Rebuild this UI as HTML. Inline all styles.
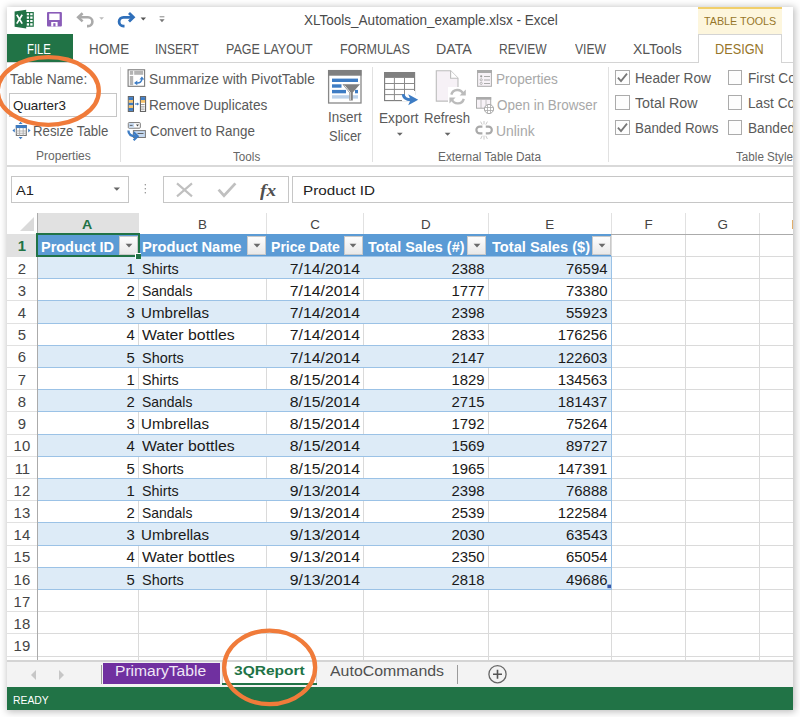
<!DOCTYPE html><html><head><meta charset="utf-8"><style>html,body{margin:0;padding:0;background:#fff;width:800px;height:717px;overflow:hidden;position:relative}
.r{position:absolute}
.t{position:absolute;white-space:nowrap;line-height:normal;font-family:"Liberation Sans",sans-serif}
</style></head><body>
<div class="r" style="left:7px;top:7px;width:786.00px;height:703.25px;background:#fff;box-shadow:1px 1px 7px 1px rgba(0,0,0,0.26);"></div>
<div class="r" style="left:0;top:0;width:793px;height:710.25px;overflow:hidden">
<div class="r" style="left:698px;top:7px;width:84.00px;height:26.50px;background:#fdf6dd;border-top:2px solid #f1cf6b;box-sizing:border-box;"></div>
<div class="r" style="left:7px;top:61.5px;width:786.00px;height:1.00px;background:#d4d4d4;"></div>
<div class="r" style="left:7px;top:34.2px;width:66.00px;height:28.30px;background:#217346;"></div>
<div class="r" style="left:698px;top:33.5px;width:84.00px;height:29.00px;background:#fff;border:1px solid #d4d4d4;border-bottom:none;box-sizing:border-box;"></div>
<div class="r" style="left:7px;top:165px;width:786.00px;height:1.50px;background:#d9d9d9;"></div>
<div class="r" style="left:120.2px;top:67px;width:1.00px;height:94.50px;background:#e1e1e1;"></div>
<div class="r" style="left:372.3px;top:67px;width:1.00px;height:94.50px;background:#e1e1e1;"></div>
<div class="r" style="left:608.3px;top:67px;width:1.00px;height:94.50px;background:#e1e1e1;"></div>
<div class="r" style="left:615.2px;top:70.2px;width:14.50px;height:14.50px;background:#fdfdfd;border:1px solid #ababab;box-sizing:border-box;"></div>
<div class="r" style="left:615.2px;top:95.3px;width:14.50px;height:14.50px;background:#fdfdfd;border:1px solid #ababab;box-sizing:border-box;"></div>
<div class="r" style="left:615.2px;top:120.2px;width:14.50px;height:14.50px;background:#fdfdfd;border:1px solid #ababab;box-sizing:border-box;"></div>
<div class="r" style="left:727.9px;top:70.2px;width:14.50px;height:14.50px;background:#fdfdfd;border:1px solid #ababab;box-sizing:border-box;"></div>
<div class="r" style="left:727.9px;top:95.3px;width:14.50px;height:14.50px;background:#fdfdfd;border:1px solid #ababab;box-sizing:border-box;"></div>
<div class="r" style="left:727.9px;top:120.2px;width:14.50px;height:14.50px;background:#fdfdfd;border:1px solid #ababab;box-sizing:border-box;"></div>
<div class="r" style="left:10.5px;top:176.4px;width:118.00px;height:26.80px;background:#fff;border:1px solid #c6c6c6;box-sizing:border-box;"></div>
<div class="r" style="left:163.3px;top:176.3px;width:126.10px;height:27.00px;background:#fff;border:1px solid #c6c6c6;box-sizing:border-box;"></div>
<div class="r" style="left:292.2px;top:176.3px;width:512.80px;height:26.40px;background:#fff;border:1px solid #c6c6c6;box-sizing:border-box;"></div>
<div class="r" style="left:9.2px;top:92.7px;width:107.50px;height:24.00px;background:#fff;border:1px solid #c6c6c6;box-sizing:border-box;"></div>
<div class="r" style="left:7px;top:212.7px;width:786.00px;height:21.50px;background:#fff;"></div>
<div class="r" style="left:37.2px;top:212.7px;width:101.80px;height:21.50px;background:#e1e1e1;"></div>
<div class="r" style="left:138.1px;top:212.7px;width:1.00px;height:21.50px;background:#e1e1e1;"></div>
<div class="r" style="left:266.0px;top:212.7px;width:1.00px;height:21.50px;background:#e1e1e1;"></div>
<div class="r" style="left:363.0px;top:212.7px;width:1.00px;height:21.50px;background:#e1e1e1;"></div>
<div class="r" style="left:487.6px;top:212.7px;width:1.00px;height:21.50px;background:#e1e1e1;"></div>
<div class="r" style="left:610.8px;top:212.7px;width:1.00px;height:21.50px;background:#e1e1e1;"></div>
<div class="r" style="left:685.25px;top:212.7px;width:1.00px;height:21.50px;background:#e1e1e1;"></div>
<div class="r" style="left:759.0px;top:212.7px;width:1.00px;height:21.50px;background:#e1e1e1;"></div>
<div class="r" style="left:7px;top:233.6px;width:786.00px;height:1.00px;background:#ababab;"></div>
<svg class="r" style="left:19px;top:216px" width="16" height="16"><path d="M15 1 L15 15 L1 15 Z" fill="#dadada"/></svg>
<div class="r" style="left:7px;top:234.2px;width:30.20px;height:426.30px;background:#fff;"></div>
<div class="r" style="left:7px;top:234.2px;width:30.20px;height:22.21px;background:#e1e1e1;"></div>
<div class="r" style="left:7px;top:255.90999999999997px;width:30.20px;height:1.00px;background:#e1e1e1;"></div>
<div class="r" style="left:7px;top:278.12px;width:30.20px;height:1.00px;background:#e1e1e1;"></div>
<div class="r" style="left:7px;top:300.33px;width:30.20px;height:1.00px;background:#e1e1e1;"></div>
<div class="r" style="left:7px;top:322.53999999999996px;width:30.20px;height:1.00px;background:#e1e1e1;"></div>
<div class="r" style="left:7px;top:344.75px;width:30.20px;height:1.00px;background:#e1e1e1;"></div>
<div class="r" style="left:7px;top:366.96px;width:30.20px;height:1.00px;background:#e1e1e1;"></div>
<div class="r" style="left:7px;top:389.16999999999996px;width:30.20px;height:1.00px;background:#e1e1e1;"></div>
<div class="r" style="left:7px;top:411.38px;width:30.20px;height:1.00px;background:#e1e1e1;"></div>
<div class="r" style="left:7px;top:433.59000000000003px;width:30.20px;height:1.00px;background:#e1e1e1;"></div>
<div class="r" style="left:7px;top:455.8px;width:30.20px;height:1.00px;background:#e1e1e1;"></div>
<div class="r" style="left:7px;top:478.01px;width:30.20px;height:1.00px;background:#e1e1e1;"></div>
<div class="r" style="left:7px;top:500.21999999999997px;width:30.20px;height:1.00px;background:#e1e1e1;"></div>
<div class="r" style="left:7px;top:522.4300000000001px;width:30.20px;height:1.00px;background:#e1e1e1;"></div>
<div class="r" style="left:7px;top:544.64px;width:30.20px;height:1.00px;background:#e1e1e1;"></div>
<div class="r" style="left:7px;top:566.85px;width:30.20px;height:1.00px;background:#e1e1e1;"></div>
<div class="r" style="left:7px;top:589.06px;width:30.20px;height:1.00px;background:#e1e1e1;"></div>
<div class="r" style="left:7px;top:611.27px;width:30.20px;height:1.00px;background:#e1e1e1;"></div>
<div class="r" style="left:7px;top:633.48px;width:30.20px;height:1.00px;background:#e1e1e1;"></div>
<div class="r" style="left:7px;top:655.69px;width:30.20px;height:1.00px;background:#e1e1e1;"></div>
<div class="r" style="left:36.7px;top:212.7px;width:1.00px;height:447.80px;background:#ababab;"></div>
<div class="r" style="left:37.7px;top:589.06px;width:755.30px;height:1.00px;background:#dadada;"></div>
<div class="r" style="left:37.7px;top:611.27px;width:755.30px;height:1.00px;background:#dadada;"></div>
<div class="r" style="left:37.7px;top:633.48px;width:755.30px;height:1.00px;background:#dadada;"></div>
<div class="r" style="left:37.7px;top:655.69px;width:755.30px;height:1.00px;background:#dadada;"></div>
<div class="r" style="left:138.1px;top:234.6px;width:1.00px;height:425.90px;background:#dadada;"></div>
<div class="r" style="left:266.0px;top:234.6px;width:1.00px;height:425.90px;background:#dadada;"></div>
<div class="r" style="left:363.0px;top:234.6px;width:1.00px;height:425.90px;background:#dadada;"></div>
<div class="r" style="left:487.6px;top:234.6px;width:1.00px;height:425.90px;background:#dadada;"></div>
<div class="r" style="left:610.8px;top:234.6px;width:1.00px;height:425.90px;background:#dadada;"></div>
<div class="r" style="left:685.25px;top:234.6px;width:1.00px;height:425.90px;background:#dadada;"></div>
<div class="r" style="left:759.0px;top:234.6px;width:1.00px;height:425.90px;background:#dadada;"></div>
<div class="r" style="left:611.3px;top:255.90999999999997px;width:181.70px;height:1.00px;background:#dadada;"></div>
<div class="r" style="left:611.3px;top:278.12px;width:181.70px;height:1.00px;background:#dadada;"></div>
<div class="r" style="left:611.3px;top:300.33px;width:181.70px;height:1.00px;background:#dadada;"></div>
<div class="r" style="left:611.3px;top:322.53999999999996px;width:181.70px;height:1.00px;background:#dadada;"></div>
<div class="r" style="left:611.3px;top:344.75px;width:181.70px;height:1.00px;background:#dadada;"></div>
<div class="r" style="left:611.3px;top:366.96px;width:181.70px;height:1.00px;background:#dadada;"></div>
<div class="r" style="left:611.3px;top:389.16999999999996px;width:181.70px;height:1.00px;background:#dadada;"></div>
<div class="r" style="left:611.3px;top:411.38px;width:181.70px;height:1.00px;background:#dadada;"></div>
<div class="r" style="left:611.3px;top:433.59000000000003px;width:181.70px;height:1.00px;background:#dadada;"></div>
<div class="r" style="left:611.3px;top:455.8px;width:181.70px;height:1.00px;background:#dadada;"></div>
<div class="r" style="left:611.3px;top:478.01px;width:181.70px;height:1.00px;background:#dadada;"></div>
<div class="r" style="left:611.3px;top:500.21999999999997px;width:181.70px;height:1.00px;background:#dadada;"></div>
<div class="r" style="left:611.3px;top:522.4300000000001px;width:181.70px;height:1.00px;background:#dadada;"></div>
<div class="r" style="left:611.3px;top:544.64px;width:181.70px;height:1.00px;background:#dadada;"></div>
<div class="r" style="left:611.3px;top:566.85px;width:181.70px;height:1.00px;background:#dadada;"></div>
<div class="r" style="left:611.3px;top:589.06px;width:181.70px;height:1.00px;background:#dadada;"></div>
<div class="r" style="left:37.7px;top:234.2px;width:573.60px;height:22.21px;background:#5b9bd5;"></div>
<div class="r" style="left:37.7px;top:256.40999999999997px;width:573.60px;height:22.21px;background:#ddebf7;"></div>
<div class="r" style="left:37.7px;top:255.90999999999997px;width:573.60px;height:1.00px;background:#9bc2e6;"></div>
<div class="r" style="left:37.7px;top:278.62px;width:573.60px;height:22.21px;background:#ffffff;"></div>
<div class="r" style="left:138.1px;top:278.62px;width:1.00px;height:22.21px;background:#dadada;"></div>
<div class="r" style="left:266.0px;top:278.62px;width:1.00px;height:22.21px;background:#dadada;"></div>
<div class="r" style="left:363.0px;top:278.62px;width:1.00px;height:22.21px;background:#dadada;"></div>
<div class="r" style="left:487.6px;top:278.62px;width:1.00px;height:22.21px;background:#dadada;"></div>
<div class="r" style="left:37.7px;top:278.12px;width:573.60px;height:1.00px;background:#9bc2e6;"></div>
<div class="r" style="left:37.7px;top:300.83px;width:573.60px;height:22.21px;background:#ddebf7;"></div>
<div class="r" style="left:37.7px;top:300.33px;width:573.60px;height:1.00px;background:#9bc2e6;"></div>
<div class="r" style="left:37.7px;top:323.03999999999996px;width:573.60px;height:22.21px;background:#ffffff;"></div>
<div class="r" style="left:138.1px;top:323.03999999999996px;width:1.00px;height:22.21px;background:#dadada;"></div>
<div class="r" style="left:266.0px;top:323.03999999999996px;width:1.00px;height:22.21px;background:#dadada;"></div>
<div class="r" style="left:363.0px;top:323.03999999999996px;width:1.00px;height:22.21px;background:#dadada;"></div>
<div class="r" style="left:487.6px;top:323.03999999999996px;width:1.00px;height:22.21px;background:#dadada;"></div>
<div class="r" style="left:37.7px;top:322.53999999999996px;width:573.60px;height:1.00px;background:#9bc2e6;"></div>
<div class="r" style="left:37.7px;top:345.25px;width:573.60px;height:22.21px;background:#ddebf7;"></div>
<div class="r" style="left:37.7px;top:344.75px;width:573.60px;height:1.00px;background:#9bc2e6;"></div>
<div class="r" style="left:37.7px;top:367.46px;width:573.60px;height:22.21px;background:#ffffff;"></div>
<div class="r" style="left:138.1px;top:367.46px;width:1.00px;height:22.21px;background:#dadada;"></div>
<div class="r" style="left:266.0px;top:367.46px;width:1.00px;height:22.21px;background:#dadada;"></div>
<div class="r" style="left:363.0px;top:367.46px;width:1.00px;height:22.21px;background:#dadada;"></div>
<div class="r" style="left:487.6px;top:367.46px;width:1.00px;height:22.21px;background:#dadada;"></div>
<div class="r" style="left:37.7px;top:366.96px;width:573.60px;height:1.00px;background:#9bc2e6;"></div>
<div class="r" style="left:37.7px;top:389.66999999999996px;width:573.60px;height:22.21px;background:#ddebf7;"></div>
<div class="r" style="left:37.7px;top:389.16999999999996px;width:573.60px;height:1.00px;background:#9bc2e6;"></div>
<div class="r" style="left:37.7px;top:411.88px;width:573.60px;height:22.21px;background:#ffffff;"></div>
<div class="r" style="left:138.1px;top:411.88px;width:1.00px;height:22.21px;background:#dadada;"></div>
<div class="r" style="left:266.0px;top:411.88px;width:1.00px;height:22.21px;background:#dadada;"></div>
<div class="r" style="left:363.0px;top:411.88px;width:1.00px;height:22.21px;background:#dadada;"></div>
<div class="r" style="left:487.6px;top:411.88px;width:1.00px;height:22.21px;background:#dadada;"></div>
<div class="r" style="left:37.7px;top:411.38px;width:573.60px;height:1.00px;background:#9bc2e6;"></div>
<div class="r" style="left:37.7px;top:434.09000000000003px;width:573.60px;height:22.21px;background:#ddebf7;"></div>
<div class="r" style="left:37.7px;top:433.59000000000003px;width:573.60px;height:1.00px;background:#9bc2e6;"></div>
<div class="r" style="left:37.7px;top:456.3px;width:573.60px;height:22.21px;background:#ffffff;"></div>
<div class="r" style="left:138.1px;top:456.3px;width:1.00px;height:22.21px;background:#dadada;"></div>
<div class="r" style="left:266.0px;top:456.3px;width:1.00px;height:22.21px;background:#dadada;"></div>
<div class="r" style="left:363.0px;top:456.3px;width:1.00px;height:22.21px;background:#dadada;"></div>
<div class="r" style="left:487.6px;top:456.3px;width:1.00px;height:22.21px;background:#dadada;"></div>
<div class="r" style="left:37.7px;top:455.8px;width:573.60px;height:1.00px;background:#9bc2e6;"></div>
<div class="r" style="left:37.7px;top:478.51px;width:573.60px;height:22.21px;background:#ddebf7;"></div>
<div class="r" style="left:37.7px;top:478.01px;width:573.60px;height:1.00px;background:#9bc2e6;"></div>
<div class="r" style="left:37.7px;top:500.71999999999997px;width:573.60px;height:22.21px;background:#ffffff;"></div>
<div class="r" style="left:138.1px;top:500.71999999999997px;width:1.00px;height:22.21px;background:#dadada;"></div>
<div class="r" style="left:266.0px;top:500.71999999999997px;width:1.00px;height:22.21px;background:#dadada;"></div>
<div class="r" style="left:363.0px;top:500.71999999999997px;width:1.00px;height:22.21px;background:#dadada;"></div>
<div class="r" style="left:487.6px;top:500.71999999999997px;width:1.00px;height:22.21px;background:#dadada;"></div>
<div class="r" style="left:37.7px;top:500.21999999999997px;width:573.60px;height:1.00px;background:#9bc2e6;"></div>
<div class="r" style="left:37.7px;top:522.9300000000001px;width:573.60px;height:22.21px;background:#ddebf7;"></div>
<div class="r" style="left:37.7px;top:522.4300000000001px;width:573.60px;height:1.00px;background:#9bc2e6;"></div>
<div class="r" style="left:37.7px;top:545.14px;width:573.60px;height:22.21px;background:#ffffff;"></div>
<div class="r" style="left:138.1px;top:545.14px;width:1.00px;height:22.21px;background:#dadada;"></div>
<div class="r" style="left:266.0px;top:545.14px;width:1.00px;height:22.21px;background:#dadada;"></div>
<div class="r" style="left:363.0px;top:545.14px;width:1.00px;height:22.21px;background:#dadada;"></div>
<div class="r" style="left:487.6px;top:545.14px;width:1.00px;height:22.21px;background:#dadada;"></div>
<div class="r" style="left:37.7px;top:544.64px;width:573.60px;height:1.00px;background:#9bc2e6;"></div>
<div class="r" style="left:37.7px;top:567.35px;width:573.60px;height:22.21px;background:#ddebf7;"></div>
<div class="r" style="left:37.7px;top:566.85px;width:573.60px;height:1.00px;background:#9bc2e6;"></div>
<div class="r" style="left:37.7px;top:589.06px;width:573.60px;height:1.00px;background:#9bc2e6;"></div>
<div class="r" style="left:610.8px;top:256.40999999999997px;width:1.00px;height:333.15px;background:#9bc2e6;"></div>
<div class="r" style="left:119px;top:235.8px;width:19.00px;height:19.00px;background:linear-gradient(#fdfdfd,#e9e9e9);border:1px solid #c9c9c9;box-sizing:border-box;"></div>
<svg class="r" style="left:123.50px;top:241.5px" width="10" height="8"><path d="M1.6 1.8 L8.4 1.8 L5 5.6 Z" fill="#6a6a6a"/></svg>
<div class="r" style="left:247.3px;top:235.8px;width:19.00px;height:19.00px;background:linear-gradient(#fdfdfd,#e9e9e9);border:1px solid #c9c9c9;box-sizing:border-box;"></div>
<svg class="r" style="left:251.80px;top:241.5px" width="10" height="8"><path d="M1.6 1.8 L8.4 1.8 L5 5.6 Z" fill="#6a6a6a"/></svg>
<div class="r" style="left:343.7px;top:235.8px;width:19.00px;height:19.00px;background:linear-gradient(#fdfdfd,#e9e9e9);border:1px solid #c9c9c9;box-sizing:border-box;"></div>
<svg class="r" style="left:348.20px;top:241.5px" width="10" height="8"><path d="M1.6 1.8 L8.4 1.8 L5 5.6 Z" fill="#6a6a6a"/></svg>
<div class="r" style="left:467px;top:235.8px;width:19.00px;height:19.00px;background:linear-gradient(#fdfdfd,#e9e9e9);border:1px solid #c9c9c9;box-sizing:border-box;"></div>
<svg class="r" style="left:471.50px;top:241.5px" width="10" height="8"><path d="M1.6 1.8 L8.4 1.8 L5 5.6 Z" fill="#6a6a6a"/></svg>
<div class="r" style="left:592px;top:235.8px;width:19.00px;height:19.00px;background:linear-gradient(#fdfdfd,#e9e9e9);border:1px solid #c9c9c9;box-sizing:border-box;"></div>
<svg class="r" style="left:596.50px;top:241.5px" width="10" height="8"><path d="M1.6 1.8 L8.4 1.8 L5 5.6 Z" fill="#6a6a6a"/></svg>
<div class="r" style="left:36.2px;top:233.2px;width:103.60px;height:24.20px;border:2px solid #217346;box-sizing:border-box;"></div>
<div class="r" style="left:135px;top:253px;width:5.60px;height:5.60px;background:#217346;border-left:1px solid #fff;border-top:1px solid #fff;box-sizing:border-box;"></div>
<div class="r" style="left:7px;top:660.3px;width:786.00px;height:1.90px;background:#d4d4d4;"></div>
<div class="r" style="left:7px;top:662.2px;width:786.00px;height:25.00px;background:#f3f3f3;"></div>
<div class="r" style="left:7px;top:687.2px;width:786.00px;height:23.10px;background:#217346;"></div>
<div class="r" style="left:101px;top:665px;width:1.00px;height:19.00px;background:#9b9b9b;"></div>
<div class="r" style="left:103.2px;top:663.2px;width:117.30px;height:21.20px;background:#7030a0;"></div>
<div class="r" style="left:221.7px;top:662.2px;width:95.30px;height:22.30px;background:#fff;border-left:1px solid #d0d0d0;border-right:1px solid #d0d0d0;box-sizing:border-box;"></div>
<div class="r" style="left:221.7px;top:682.6px;width:95.30px;height:2.00px;background:#217346;"></div>
<div class="r" style="left:457px;top:664.5px;width:1.20px;height:19.00px;background:#9b9b9b;"></div>
<svg class="r" style="left:486px;top:663px" width="24" height="24"><circle cx="11.5" cy="11.2" r="8.6" fill="none" stroke="#666" stroke-width="1.3"/><path d="M7 11.2 H16 M11.5 6.7 V15.7" stroke="#555" stroke-width="1.6"/></svg>
<svg class="r" style="left:28px;top:667px" width="40" height="16"><path d="M8 3 L3 8 L8 13 Z" fill="#c6c6c6"/><path d="M31 3 L36 8 L31 13 Z" fill="#c6c6c6"/></svg>
<svg class="r" style="left:13px;top:9px;overflow:visible" width="22" height="21" viewBox="13 9 22 21"><path d="M14.6 11.6 L26.2 9.8 L26.2 28.6 L14.6 26.8 Z" fill="#217346"/><rect x="26.2" y="12.6" width="7" height="13.6" fill="#fff" stroke="#217346" stroke-width="1.2"/><path d="M26 15.9 H33 M26 19.3 H33 M26 22.7 H33 M29.6 12.6 V26" stroke="#217346" stroke-width="1.2"/><path d="M16.8 14.8 L22.2 23.6 M22.2 14.8 L16.8 23.6" stroke="#fff" stroke-width="1.7"/></svg>
<svg class="r" style="left:46px;top:11px;overflow:visible" width="17" height="17" viewBox="46 11 17 17"><rect x="47" y="12" width="14.9" height="14.4" rx="1" fill="#8a5cb8"/><rect x="49.2" y="13.6" width="10.4" height="6.4" fill="#fff"/><rect x="51.2" y="22" width="6.4" height="4.4" fill="#fff"/><rect x="53.3" y="23.2" width="2.2" height="3.2" fill="#8a5cb8"/></svg>
<svg class="r" style="left:74px;top:11px;overflow:visible" width="32" height="18" viewBox="74 11 32 18"><path d="M78.5 17.3 H88 A4.4 4.4 0 0 1 88 26.1 H87" fill="none" stroke="#aaa" stroke-width="2.6"/><path d="M82.6 13.2 L78.2 17.3 L82.6 21.4" fill="none" stroke="#aaa" stroke-width="2.6"/><path d="M99.2 17.2 H104 L101.6 19.8 Z" fill="#bbb"/></svg>
<svg class="r" style="left:115px;top:11px;overflow:visible" width="50" height="18" viewBox="115 11 50 18"><path d="M133 17.3 H123.5 A4.4 4.4 0 0 0 123.5 26.1 H124.5" fill="none" stroke="#2f6fba" stroke-width="2.8"/><path d="M129 13 L133.4 17.3 L129 21.6" fill="none" stroke="#2f6fba" stroke-width="2.8"/><path d="M140.6 17.6 H146 L143.3 20.6 Z" fill="#555"/><path d="M159.6 16.8 H164.4" stroke="#888" stroke-width="1"/><path d="M159.4 19.2 H164.6 L162 22.2 Z" fill="#777"/></svg>
<svg class="r" style="left:11px;top:121px;overflow:visible" width="20" height="20" viewBox="11 121 20 20"><rect x="16.3" y="125.6" width="10" height="9.8" fill="#fff" stroke="#666" stroke-width="1"/><rect x="15.8" y="125.1" width="11" height="3" fill="#3d7cc4"/><path d="M16 131 H26.5 M16 133.2 H26.5 M19.6 128 V135.5 M23.2 128 V135.5" stroke="#aaa" stroke-width="0.9"/><path d="M18.6 123.9 L20.6 121.8 L22.6 123.9 Z M18.6 137.1 L20.6 139.2 L22.6 137.1 Z M14.8 128.6 L12.4 130.6 L14.8 132.6 Z M28.2 128.6 L30.6 130.6 L28.2 132.6 Z" fill="#3d7cc4"/></svg>
<svg class="r" style="left:126px;top:68px;overflow:visible" width="21" height="21" viewBox="126 68 21 21"><rect x="128.1" y="69.8" width="16.5" height="16.5" fill="#fff" stroke="#7a7a7a" stroke-width="1.1"/><rect x="129.8" y="70.8" width="3.4" height="4" fill="#b3b3b3"/><rect x="134.2" y="70.8" width="9" height="4" fill="#b3b3b3"/><rect x="129.8" y="76" width="3.4" height="9.2" fill="#b3b3b3"/><path d="M136.4 82.9 Q141.6 83.4 141.9 79" fill="none" stroke="#3d7cc4" stroke-width="1.5"/><path d="M134 82.9 L137.3 80.5 L137.3 85.3 Z M141.9 76.4 L139.5 79.6 L144.3 79.6 Z" fill="#3d7cc4"/></svg>
<svg class="r" style="left:126px;top:95px;overflow:visible" width="22" height="18" viewBox="126 95 22 18"><rect x="128.3" y="96.6" width="5.2" height="14.8" fill="#fff" stroke="#555" stroke-width="1"/><rect x="128.8" y="97.1" width="4.2" height="2.9000000000000057" fill="#3d7cc4"/><rect x="128.8" y="100" width="4.2" height="2.799999999999997" fill="#f5c26b"/><rect x="128.8" y="102.8" width="4.2" height="2.6000000000000085" fill="#3d7cc4"/><rect x="128.8" y="105.4" width="4.2" height="2.5999999999999943" fill="#f5c26b"/><rect x="128.8" y="108" width="4.2" height="2.9000000000000057" fill="#3d7cc4"/><rect x="140.4" y="96.6" width="5.2" height="14.8" fill="#fff" stroke="#555" stroke-width="1"/><rect x="140.9" y="97.1" width="4.2" height="2.9000000000000057" fill="#3d7cc4"/><rect x="140.9" y="100" width="4.2" height="2.799999999999997" fill="#f5c26b"/><path d="M141 104.6 H144.6 M141 106.9 H144.6 M141 109.1 H144.6" stroke="#777" stroke-width="0.8"/><path d="M135 104 H137.3" stroke="#3d7cc4" stroke-width="1.2"/><path d="M137 102.4 L139.3 104 L137 105.6 Z" fill="#3d7cc4"/></svg>
<svg class="r" style="left:126px;top:121px;overflow:visible" width="21" height="20" viewBox="126 121 21 20"><rect x="128.3" y="122.6" width="12" height="5.6" rx="0.8" fill="#fff" stroke="#777" stroke-width="1"/><rect x="128.9" y="123.2" width="5.2" height="4.4" fill="#c5d9f1"/><path d="M129.8 125.4 H132.6" stroke="#555" stroke-width="0.9"/><path d="M136 124.6 H139 L137.5 126.6 Z" fill="#444"/><rect x="133.4" y="130.6" width="12" height="6.9" fill="#c5d9f1" stroke="#777" stroke-width="1"/><path d="M137.5 133.5 H143.5" stroke="#555" stroke-width="0.9"/><path d="M128.4 130.6 Q128.4 136.3 136 136.3" fill="none" stroke="#3d7cc4" stroke-width="2.3"/><path d="M133.6 132.4 L137.6 136.3 L133.6 140.2" fill="none" stroke="#3d7cc4" stroke-width="2.3"/></svg>
<svg class="r" style="left:327px;top:69px;overflow:visible" width="36" height="36" viewBox="327 69 36 36"><rect x="328.6" y="70.6" width="32.4" height="32.4" fill="#fff" stroke="#888" stroke-width="1.3"/><rect x="328" y="70.1" width="33.5" height="5.6" fill="#7f7f7f"/><rect x="332" y="78.6" width="26" height="3.4" fill="#3d7cc4"/><rect x="332" y="84.3" width="9.5" height="3.4" fill="#3d7cc4"/><rect x="332" y="89.9" width="14" height="3.4" fill="#3d7cc4"/><rect x="355" y="89.9" width="3" height="3.4" fill="#3d7cc4"/><rect x="332" y="95.2" width="26" height="3.4" fill="#bcd2ea"/><path d="M342.4 84.2 H360 L352.8 92.6 V100.6 H349.2 V92.6 Z" fill="#808080"/><path d="M344.6 85.5 L350.2 92.3 V100" fill="none" stroke="#fff" stroke-width="0.8"/></svg>
<svg class="r" style="left:383px;top:71px;overflow:visible" width="37" height="36" viewBox="383 71 37 36"><rect x="384.6" y="72.6" width="30" height="28" fill="#fff" stroke="#7a7a7a" stroke-width="1.1"/><rect x="384.1" y="72.1" width="30.9" height="5.8" fill="#808080"/><path d="M384.6 83.5 H414.6 M384.6 89.4 H414.6 M384.6 94.6 H414.6 M394.4 78 V100.6 M404.5 78 V100.6" stroke="#8a8a8a" stroke-width="1"/><rect x="402" y="94.8" width="14" height="6.4" fill="#fff"/><rect x="405" y="91" width="10" height="4" fill="#fff"/><path d="M403.2 94.2 Q403.6 99.8 411 99.8" fill="none" stroke="#3d7cc4" stroke-width="3"/><path d="M408.2 94.2 L418.2 99.7 L408.2 105.2 L410.6 99.7 Z" fill="#3d7cc4"/></svg>
<svg class="r" style="left:434px;top:69px;overflow:visible" width="34" height="38" viewBox="434 69 34 38"><path d="M436.3 70.8 H450.6 L458 78.2 V101.1 H436.3 Z" fill="#f6f1f6" stroke="#bdbdbd" stroke-width="1.1"/><path d="M450.6 70.8 V78.2 H458" fill="#fff" stroke="#bdbdbd" stroke-width="1.1"/><rect x="448" y="87" width="19" height="19" fill="#fff"/><path d="M451.3 94.6 A6.3 6.3 0 0 1 463.2 94" fill="none" stroke="#bbb" stroke-width="2.4"/><path d="M463.8 98.8 A6.3 6.3 0 0 1 451.9 99.4" fill="none" stroke="#bbb" stroke-width="2.4"/><path d="M465.8 89.5 V95.6 H459.6 Z M449.4 103.6 V97.5 H455.6 Z" fill="#bbb"/></svg>
<svg class="r" style="left:395px;top:131px;overflow:visible" width="60" height="6" viewBox="395 131 60 6"><path d="M396.9 132.8 H402.7 L399.8 135.7 Z M444.7 132.8 H450.5 L447.6 135.7 Z" fill="#666"/></svg>
<svg class="r" style="left:476px;top:69px;overflow:visible" width="17" height="19" viewBox="476 69 17 19"><rect x="477.6" y="70.5" width="13.8" height="15.8" fill="#f7f2f7" stroke="#aaa" stroke-width="1"/><rect x="477.1" y="70" width="14.8" height="3" fill="#aaa"/><circle cx="481.2" cy="76.3" r="1.1" fill="#999"/><circle cx="481.2" cy="79.8" r="1.1" fill="none" stroke="#aaa" stroke-width="0.8"/><circle cx="481.2" cy="83.4" r="1.1" fill="none" stroke="#aaa" stroke-width="0.8"/><path d="M484 76.5 H490 M484 80 H490 M484 83.5 H490" stroke="#aaa" stroke-width="1"/></svg>
<svg class="r" style="left:475px;top:96px;overflow:visible" width="20" height="19" viewBox="475 96 20 19"><rect x="476.5" y="97.6" width="14.2" height="10.6" fill="#f7f2f7" stroke="#aaa" stroke-width="1"/><rect x="476" y="97.1" width="15.2" height="2.6" fill="#aaa"/><path d="M481 99.7 V108.2 M486 99.7 V108.2" stroke="#bbb" stroke-width="0.9"/><circle cx="489" cy="109" r="4.6" fill="#fff" stroke="#aaa" stroke-width="1"/><path d="M484.6 107.5 H493.4 M484.6 110.5 H493.4 M487.5 104.6 V113.4 M490.5 104.6 V113.4" stroke="#aaa" stroke-width="0.8"/></svg>
<svg class="r" style="left:475px;top:120px;overflow:visible" width="19" height="21" viewBox="475 120 19 21"><path d="M482.4 126.6 H479.8 A3.4 3.4 0 0 0 479.8 133.4 H482.4" fill="none" stroke="#a9a9a9" stroke-width="2.2"/><path d="M485.8 126.6 H488.4 A3.4 3.4 0 0 1 488.4 133.4 H485.8" fill="none" stroke="#a9a9a9" stroke-width="2.2"/><path d="M484 121 V124.4 M480.6 121.6 L482.2 124.6 M487.4 121.6 L485.8 124.6 M484 135.6 V139.6 M480.6 139 L482.2 135.8 M487.4 139 L485.8 135.8" stroke="#bbb" stroke-width="0.8"/></svg>
<svg class="r" style="left:615px;top:70px;overflow:visible" width="15" height="15" viewBox="615 70 15 15"><path d="M617.9 77.60000000000001 L621 81.0 L627 73.60000000000001" fill="none" stroke="#777" stroke-width="1.8"/></svg>
<svg class="r" style="left:615px;top:120px;overflow:visible" width="15" height="15" viewBox="615 120 15 15"><path d="M617.9 127.60000000000001 L621 131.0 L627 123.60000000000001" fill="none" stroke="#777" stroke-width="1.8"/></svg>
<svg class="r" style="left:112px;top:186px;overflow:visible" width="10" height="6" viewBox="112 186 10 6"><path d="M113.6 187.6 H120 L116.8 190.8 Z" fill="#666"/></svg>
<svg class="r" style="left:143px;top:182px;overflow:visible" width="5" height="14" viewBox="143 182 5 14"><circle cx="145.3" cy="184.8" r="0.7" fill="#888"/><circle cx="145.3" cy="188.8" r="0.7" fill="#888"/><circle cx="145.3" cy="192.8" r="0.7" fill="#888"/></svg>
<svg class="r" style="left:174px;top:181px;overflow:visible" width="110" height="20" viewBox="174 181 110 20"><path d="M177 183.4 L192 196.4 M192 183.4 L177 196.4" stroke="#c0c0c0" stroke-width="2.1"/><path d="M218.6 189.6 L224 195.6 L235.4 183.4" fill="none" stroke="#c0c0c0" stroke-width="2.8"/></svg>
<div class="t" style="left:304.20px;transform-origin:0 0;top:11.80px;font-size:14px;font-weight:normal;color:#4a4a4a;transform:scaleX(0.9656)">XLTools_Automation_example.xlsx - Excel</div>
<div class="t" style="left:704.00px;transform-origin:0 0;top:14.80px;font-size:11.2px;font-weight:normal;color:#97762a;transform:scaleX(0.9603)">TABLE TOOLS</div>
<div class="t" style="left:27.00px;transform-origin:0 0;top:41.00px;font-size:14.2px;font-weight:normal;color:#ffffff;transform:scaleX(0.7965)">FILE</div>
<div class="t" style="left:88.77px;transform-origin:0 0;top:41.00px;font-size:14.3px;font-weight:normal;color:#555;transform:scaleX(0.9334)">HOME</div>
<div class="t" style="left:154.86px;transform-origin:0 0;top:41.00px;font-size:14.3px;font-weight:normal;color:#555;transform:scaleX(0.8399)">INSERT</div>
<div class="t" style="left:225.92px;transform-origin:0 0;top:41.00px;font-size:14.3px;font-weight:normal;color:#555;transform:scaleX(0.8782)">PAGE LAYOUT</div>
<div class="t" style="left:339.92px;transform-origin:0 0;top:41.00px;font-size:14.3px;font-weight:normal;color:#555;transform:scaleX(0.8793)">FORMULAS</div>
<div class="t" style="left:436.00px;transform-origin:0 0;top:41.00px;font-size:14.3px;font-weight:normal;color:#555;transform:scaleX(0.9952)">DATA</div>
<div class="t" style="left:499.16px;transform-origin:0 0;top:41.00px;font-size:14.3px;font-weight:normal;color:#555;transform:scaleX(0.8443)">REVIEW</div>
<div class="t" style="left:574.50px;transform-origin:0 0;top:41.00px;font-size:14.3px;font-weight:normal;color:#555;transform:scaleX(0.8503)">VIEW</div>
<div class="t" style="left:633.00px;transform-origin:0 0;top:41.00px;font-size:14.3px;font-weight:normal;color:#555;transform:scaleX(0.9788)">XLTools</div>
<div class="t" style="left:715.39px;transform-origin:0 0;top:41.00px;font-size:14px;font-weight:normal;color:#97762a;transform:scaleX(0.9095)">DESIGN</div>
<div class="t" style="left:10.20px;transform-origin:0 0;top:72.20px;font-size:13.8px;font-weight:normal;color:#5a5a5a;transform:scaleX(0.9984)">Table Name:</div>
<div class="t" style="left:12.50px;transform-origin:0 0;top:97.90px;font-size:13.2px;font-weight:normal;color:#222;transform:scaleX(1.0153)">Quarter3</div>
<div class="t" style="left:33.24px;transform-origin:0 0;top:124.00px;font-size:13.8px;font-weight:normal;color:#5a5a5a;transform:scaleX(0.9577)">Resize Table</div>
<div class="t" style="left:35.70px;transform-origin:0 0;top:149.00px;font-size:12px;font-weight:normal;color:#666;transform:scaleX(1.0020)">Properties</div>
<div class="t" style="left:149.20px;transform-origin:0 0;top:71.70px;font-size:13.8px;font-weight:normal;color:#5a5a5a;transform:scaleX(1.0015)">Summarize with PivotTable</div>
<div class="t" style="left:148.61px;transform-origin:0 0;top:97.60px;font-size:13.8px;font-weight:normal;color:#5a5a5a;transform:scaleX(0.9888)">Remove Duplicates</div>
<div class="t" style="left:149.50px;transform-origin:0 0;top:123.90px;font-size:13.8px;font-weight:normal;color:#5a5a5a;transform:scaleX(0.9699)">Convert to Range</div>
<div class="t" style="left:232.80px;transform-origin:0 0;top:149.50px;font-size:12px;font-weight:normal;color:#666;transform:scaleX(0.9710)">Tools</div>
<div class="t" style="left:327.53px;transform-origin:0 0;top:110.00px;font-size:13.8px;font-weight:normal;color:#5a5a5a;transform:scaleX(0.9741)">Insert</div>
<div class="t" style="left:328.50px;transform-origin:0 0;top:129.20px;font-size:13.8px;font-weight:normal;color:#5a5a5a;transform:scaleX(0.9397)">Slicer</div>
<div class="t" style="left:378.81px;transform-origin:0 0;top:110.50px;font-size:13.8px;font-weight:normal;color:#5a5a5a;transform:scaleX(0.9912)">Export</div>
<div class="t" style="left:424.05px;transform-origin:0 0;top:110.50px;font-size:13.8px;font-weight:normal;color:#5a5a5a;transform:scaleX(0.9521)">Refresh</div>
<div class="t" style="left:496.22px;transform-origin:0 0;top:72.10px;font-size:13.8px;font-weight:normal;color:#a8a8a8;transform:scaleX(0.9841)">Properties</div>
<div class="t" style="left:497.00px;transform-origin:0 0;top:97.80px;font-size:13.8px;font-weight:normal;color:#a8a8a8;transform:scaleX(0.9752)">Open in Browser</div>
<div class="t" style="left:495.99px;transform-origin:0 0;top:123.50px;font-size:13.8px;font-weight:normal;color:#a8a8a8;transform:scaleX(1.0069)">Unlink</div>
<div class="t" style="left:437.80px;transform-origin:0 0;top:149.60px;font-size:12px;font-weight:normal;color:#666;transform:scaleX(0.9852)">External Table Data</div>
<div class="t" style="left:634.71px;transform-origin:0 0;top:70.70px;font-size:13.8px;font-weight:normal;color:#5a5a5a;transform:scaleX(0.9905)">Header Row</div>
<div class="t" style="left:634.80px;transform-origin:0 0;top:95.90px;font-size:13.8px;font-weight:normal;color:#5a5a5a;transform:scaleX(1.0311)">Total Row</div>
<div class="t" style="left:634.73px;transform-origin:0 0;top:120.50px;font-size:13.8px;font-weight:normal;color:#5a5a5a;transform:scaleX(0.9706)">Banded Rows</div>
<div class="t" style="left:747.51px;transform-origin:0 0;top:70.70px;font-size:13.8px;font-weight:normal;color:#5a5a5a;transform:scaleX(0.9905)">First Column</div>
<div class="t" style="left:747.51px;transform-origin:0 0;top:95.90px;font-size:13.8px;font-weight:normal;color:#5a5a5a;transform:scaleX(0.9905)">Last Column</div>
<div class="t" style="left:747.51px;transform-origin:0 0;top:120.50px;font-size:13.8px;font-weight:normal;color:#5a5a5a;transform:scaleX(0.9905)">Banded Columns</div>
<div class="t" style="left:736.10px;transform-origin:0 0;top:149.60px;font-size:12px;font-weight:normal;color:#666;transform:scaleX(0.9710)">Table Style Options</div>
<div class="t" style="left:16.30px;transform-origin:0 0;top:183.00px;font-size:13.7px;font-weight:normal;color:#222;transform:scaleX(1.0726)">A1</div>
<div class="t" style="left:259.70px;transform-origin:0 0;top:181.00px;font-size:17px;font-weight:bold;color:#505050;font-family:'Liberation Serif',serif;font-style:italic;transform:scaleX(1.1391)">fx</div>
<div class="t" style="left:303.39px;transform-origin:0 0;top:182.80px;font-size:13.7px;font-weight:normal;color:#222;transform:scaleX(1.1117)">Product ID</div>
<div class="t" style="left:82.40px;transform-origin:0 0;top:217.40px;font-size:13.4px;font-weight:bold;color:#217346;transform:scaleX(1.0600)">A</div>
<div class="t" style="left:198.08px;width:8.93px;transform-origin:4.47px 0;top:217.40px;font-size:13.4px;font-weight:normal;color:#444;transform:scaleX(1.0000)">B</div>
<div class="t" style="left:310.16px;width:9.67px;transform-origin:4.84px 0;top:217.40px;font-size:13.4px;font-weight:normal;color:#444;transform:scaleX(1.0000)">C</div>
<div class="t" style="left:420.96px;width:9.67px;transform-origin:4.84px 0;top:217.40px;font-size:13.4px;font-weight:normal;color:#444;transform:scaleX(1.0000)">D</div>
<div class="t" style="left:545.23px;width:8.93px;transform-origin:4.47px 0;top:217.40px;font-size:13.4px;font-weight:normal;color:#444;transform:scaleX(1.0000)">E</div>
<div class="t" style="left:644.44px;width:8.18px;transform-origin:4.09px 0;top:217.40px;font-size:13.4px;font-weight:normal;color:#444;transform:scaleX(1.0000)">F</div>
<div class="t" style="left:717.42px;width:10.42px;transform-origin:5.21px 0;top:217.40px;font-size:13.4px;font-weight:normal;color:#444;transform:scaleX(1.0000)">G</div>
<div class="t" style="left:791.41px;width:9.67px;transform-origin:4.84px 0;top:217.40px;font-size:13.4px;font-weight:normal;color:#444;transform:scaleX(1.0000)">H</div>
<div class="t" style="left:41.30px;transform-origin:0 0;top:240.10px;font-size:13.8px;font-weight:bold;color:#ffffff;transform:scaleX(1.0474)">Product ID</div>
<div class="t" style="left:142.40px;transform-origin:0 0;top:240.10px;font-size:13.8px;font-weight:bold;color:#ffffff;transform:scaleX(1.0633)">Product Name</div>
<div class="t" style="left:270.80px;transform-origin:0 0;top:240.10px;font-size:13.8px;font-weight:bold;color:#ffffff;transform:scaleX(1.0189)">Price Date</div>
<div class="t" style="left:368.10px;transform-origin:0 0;top:240.10px;font-size:13.8px;font-weight:bold;color:#ffffff;transform:scaleX(1.0422)">Total Sales (#)</div>
<div class="t" style="left:491.50px;transform-origin:0 0;top:240.10px;font-size:13.8px;font-weight:bold;color:#ffffff;transform:scaleX(1.0596)">Total Sales ($)</div>
<div class="t" style="left:126.79px;width:7.89px;transform-origin:7.89px 0;text-align:right;top:260.71px;font-size:14.2px;font-weight:normal;color:#1a1a1a;transform:scaleX(1.0500)">1</div>
<div class="t" style="left:141.80px;transform-origin:0 0;top:260.71px;font-size:14.2px;font-weight:normal;color:#1a1a1a;transform:scaleX(1.0090)">Shirts</div>
<div class="t" style="left:296.96px;width:63.12px;transform-origin:63.12px 0;text-align:right;top:260.71px;font-size:14.2px;font-weight:normal;color:#1a1a1a;transform:scaleX(1.1150)">7/14/2014</div>
<div class="t" style="left:452.82px;width:31.56px;transform-origin:31.56px 0;text-align:right;top:260.71px;font-size:14.2px;font-weight:normal;color:#1a1a1a;transform:scaleX(1.0500)">2388</div>
<div class="t" style="left:568.23px;width:39.45px;transform-origin:39.45px 0;text-align:right;top:260.71px;font-size:14.2px;font-weight:normal;color:#1a1a1a;transform:scaleX(1.0500)">76594</div>
<div class="t" style="left:126.79px;width:7.89px;transform-origin:7.89px 0;text-align:right;top:282.92px;font-size:14.2px;font-weight:normal;color:#1a1a1a;transform:scaleX(1.0500)">2</div>
<div class="t" style="left:141.80px;transform-origin:0 0;top:282.92px;font-size:14.2px;font-weight:normal;color:#1a1a1a;transform:scaleX(0.9830)">Sandals</div>
<div class="t" style="left:296.96px;width:63.12px;transform-origin:63.12px 0;text-align:right;top:282.92px;font-size:14.2px;font-weight:normal;color:#1a1a1a;transform:scaleX(1.1150)">7/14/2014</div>
<div class="t" style="left:452.82px;width:31.56px;transform-origin:31.56px 0;text-align:right;top:282.92px;font-size:14.2px;font-weight:normal;color:#1a1a1a;transform:scaleX(1.0500)">1777</div>
<div class="t" style="left:568.23px;width:39.45px;transform-origin:39.45px 0;text-align:right;top:282.92px;font-size:14.2px;font-weight:normal;color:#1a1a1a;transform:scaleX(1.0500)">73380</div>
<div class="t" style="left:126.79px;width:7.89px;transform-origin:7.89px 0;text-align:right;top:305.13px;font-size:14.2px;font-weight:normal;color:#1a1a1a;transform:scaleX(1.0500)">3</div>
<div class="t" style="left:140.73px;transform-origin:0 0;top:305.13px;font-size:14.2px;font-weight:normal;color:#1a1a1a;transform:scaleX(1.0660)">Umbrellas</div>
<div class="t" style="left:296.96px;width:63.12px;transform-origin:63.12px 0;text-align:right;top:305.13px;font-size:14.2px;font-weight:normal;color:#1a1a1a;transform:scaleX(1.1150)">7/14/2014</div>
<div class="t" style="left:452.82px;width:31.56px;transform-origin:31.56px 0;text-align:right;top:305.13px;font-size:14.2px;font-weight:normal;color:#1a1a1a;transform:scaleX(1.0500)">2398</div>
<div class="t" style="left:568.23px;width:39.45px;transform-origin:39.45px 0;text-align:right;top:305.13px;font-size:14.2px;font-weight:normal;color:#1a1a1a;transform:scaleX(1.0500)">55923</div>
<div class="t" style="left:126.79px;width:7.89px;transform-origin:7.89px 0;text-align:right;top:327.34px;font-size:14.2px;font-weight:normal;color:#1a1a1a;transform:scaleX(1.0500)">4</div>
<div class="t" style="left:141.80px;transform-origin:0 0;top:327.34px;font-size:14.2px;font-weight:normal;color:#1a1a1a;transform:scaleX(1.1160)">Water bottles</div>
<div class="t" style="left:296.96px;width:63.12px;transform-origin:63.12px 0;text-align:right;top:327.34px;font-size:14.2px;font-weight:normal;color:#1a1a1a;transform:scaleX(1.1150)">7/14/2014</div>
<div class="t" style="left:452.82px;width:31.56px;transform-origin:31.56px 0;text-align:right;top:327.34px;font-size:14.2px;font-weight:normal;color:#1a1a1a;transform:scaleX(1.0500)">2833</div>
<div class="t" style="left:560.34px;width:47.34px;transform-origin:47.34px 0;text-align:right;top:327.34px;font-size:14.2px;font-weight:normal;color:#1a1a1a;transform:scaleX(1.0500)">176256</div>
<div class="t" style="left:126.79px;width:7.89px;transform-origin:7.89px 0;text-align:right;top:349.55px;font-size:14.2px;font-weight:normal;color:#1a1a1a;transform:scaleX(1.0500)">5</div>
<div class="t" style="left:141.80px;transform-origin:0 0;top:349.55px;font-size:14.2px;font-weight:normal;color:#1a1a1a;transform:scaleX(1.0190)">Shorts</div>
<div class="t" style="left:296.96px;width:63.12px;transform-origin:63.12px 0;text-align:right;top:349.55px;font-size:14.2px;font-weight:normal;color:#1a1a1a;transform:scaleX(1.1150)">7/14/2014</div>
<div class="t" style="left:452.82px;width:31.56px;transform-origin:31.56px 0;text-align:right;top:349.55px;font-size:14.2px;font-weight:normal;color:#1a1a1a;transform:scaleX(1.0500)">2147</div>
<div class="t" style="left:560.34px;width:47.34px;transform-origin:47.34px 0;text-align:right;top:349.55px;font-size:14.2px;font-weight:normal;color:#1a1a1a;transform:scaleX(1.0500)">122603</div>
<div class="t" style="left:126.79px;width:7.89px;transform-origin:7.89px 0;text-align:right;top:371.76px;font-size:14.2px;font-weight:normal;color:#1a1a1a;transform:scaleX(1.0500)">1</div>
<div class="t" style="left:141.80px;transform-origin:0 0;top:371.76px;font-size:14.2px;font-weight:normal;color:#1a1a1a;transform:scaleX(1.0090)">Shirts</div>
<div class="t" style="left:296.96px;width:63.12px;transform-origin:63.12px 0;text-align:right;top:371.76px;font-size:14.2px;font-weight:normal;color:#1a1a1a;transform:scaleX(1.1150)">8/15/2014</div>
<div class="t" style="left:452.82px;width:31.56px;transform-origin:31.56px 0;text-align:right;top:371.76px;font-size:14.2px;font-weight:normal;color:#1a1a1a;transform:scaleX(1.0500)">1829</div>
<div class="t" style="left:560.34px;width:47.34px;transform-origin:47.34px 0;text-align:right;top:371.76px;font-size:14.2px;font-weight:normal;color:#1a1a1a;transform:scaleX(1.0500)">134563</div>
<div class="t" style="left:126.79px;width:7.89px;transform-origin:7.89px 0;text-align:right;top:393.97px;font-size:14.2px;font-weight:normal;color:#1a1a1a;transform:scaleX(1.0500)">2</div>
<div class="t" style="left:141.80px;transform-origin:0 0;top:393.97px;font-size:14.2px;font-weight:normal;color:#1a1a1a;transform:scaleX(0.9830)">Sandals</div>
<div class="t" style="left:296.96px;width:63.12px;transform-origin:63.12px 0;text-align:right;top:393.97px;font-size:14.2px;font-weight:normal;color:#1a1a1a;transform:scaleX(1.1150)">8/15/2014</div>
<div class="t" style="left:452.82px;width:31.56px;transform-origin:31.56px 0;text-align:right;top:393.97px;font-size:14.2px;font-weight:normal;color:#1a1a1a;transform:scaleX(1.0500)">2715</div>
<div class="t" style="left:560.34px;width:47.34px;transform-origin:47.34px 0;text-align:right;top:393.97px;font-size:14.2px;font-weight:normal;color:#1a1a1a;transform:scaleX(1.0500)">181437</div>
<div class="t" style="left:126.79px;width:7.89px;transform-origin:7.89px 0;text-align:right;top:416.18px;font-size:14.2px;font-weight:normal;color:#1a1a1a;transform:scaleX(1.0500)">3</div>
<div class="t" style="left:140.73px;transform-origin:0 0;top:416.18px;font-size:14.2px;font-weight:normal;color:#1a1a1a;transform:scaleX(1.0660)">Umbrellas</div>
<div class="t" style="left:296.96px;width:63.12px;transform-origin:63.12px 0;text-align:right;top:416.18px;font-size:14.2px;font-weight:normal;color:#1a1a1a;transform:scaleX(1.1150)">8/15/2014</div>
<div class="t" style="left:452.82px;width:31.56px;transform-origin:31.56px 0;text-align:right;top:416.18px;font-size:14.2px;font-weight:normal;color:#1a1a1a;transform:scaleX(1.0500)">1792</div>
<div class="t" style="left:568.23px;width:39.45px;transform-origin:39.45px 0;text-align:right;top:416.18px;font-size:14.2px;font-weight:normal;color:#1a1a1a;transform:scaleX(1.0500)">75264</div>
<div class="t" style="left:126.79px;width:7.89px;transform-origin:7.89px 0;text-align:right;top:438.39px;font-size:14.2px;font-weight:normal;color:#1a1a1a;transform:scaleX(1.0500)">4</div>
<div class="t" style="left:141.80px;transform-origin:0 0;top:438.39px;font-size:14.2px;font-weight:normal;color:#1a1a1a;transform:scaleX(1.1160)">Water bottles</div>
<div class="t" style="left:296.96px;width:63.12px;transform-origin:63.12px 0;text-align:right;top:438.39px;font-size:14.2px;font-weight:normal;color:#1a1a1a;transform:scaleX(1.1150)">8/15/2014</div>
<div class="t" style="left:452.82px;width:31.56px;transform-origin:31.56px 0;text-align:right;top:438.39px;font-size:14.2px;font-weight:normal;color:#1a1a1a;transform:scaleX(1.0500)">1569</div>
<div class="t" style="left:568.23px;width:39.45px;transform-origin:39.45px 0;text-align:right;top:438.39px;font-size:14.2px;font-weight:normal;color:#1a1a1a;transform:scaleX(1.0500)">89727</div>
<div class="t" style="left:126.79px;width:7.89px;transform-origin:7.89px 0;text-align:right;top:460.60px;font-size:14.2px;font-weight:normal;color:#1a1a1a;transform:scaleX(1.0500)">5</div>
<div class="t" style="left:141.80px;transform-origin:0 0;top:460.60px;font-size:14.2px;font-weight:normal;color:#1a1a1a;transform:scaleX(1.0190)">Shorts</div>
<div class="t" style="left:296.96px;width:63.12px;transform-origin:63.12px 0;text-align:right;top:460.60px;font-size:14.2px;font-weight:normal;color:#1a1a1a;transform:scaleX(1.1150)">8/15/2014</div>
<div class="t" style="left:452.82px;width:31.56px;transform-origin:31.56px 0;text-align:right;top:460.60px;font-size:14.2px;font-weight:normal;color:#1a1a1a;transform:scaleX(1.0500)">1965</div>
<div class="t" style="left:560.34px;width:47.34px;transform-origin:47.34px 0;text-align:right;top:460.60px;font-size:14.2px;font-weight:normal;color:#1a1a1a;transform:scaleX(1.0500)">147391</div>
<div class="t" style="left:126.79px;width:7.89px;transform-origin:7.89px 0;text-align:right;top:482.81px;font-size:14.2px;font-weight:normal;color:#1a1a1a;transform:scaleX(1.0500)">1</div>
<div class="t" style="left:141.80px;transform-origin:0 0;top:482.81px;font-size:14.2px;font-weight:normal;color:#1a1a1a;transform:scaleX(1.0090)">Shirts</div>
<div class="t" style="left:296.96px;width:63.12px;transform-origin:63.12px 0;text-align:right;top:482.81px;font-size:14.2px;font-weight:normal;color:#1a1a1a;transform:scaleX(1.1150)">9/13/2014</div>
<div class="t" style="left:452.82px;width:31.56px;transform-origin:31.56px 0;text-align:right;top:482.81px;font-size:14.2px;font-weight:normal;color:#1a1a1a;transform:scaleX(1.0500)">2398</div>
<div class="t" style="left:568.23px;width:39.45px;transform-origin:39.45px 0;text-align:right;top:482.81px;font-size:14.2px;font-weight:normal;color:#1a1a1a;transform:scaleX(1.0500)">76888</div>
<div class="t" style="left:126.79px;width:7.89px;transform-origin:7.89px 0;text-align:right;top:505.02px;font-size:14.2px;font-weight:normal;color:#1a1a1a;transform:scaleX(1.0500)">2</div>
<div class="t" style="left:141.80px;transform-origin:0 0;top:505.02px;font-size:14.2px;font-weight:normal;color:#1a1a1a;transform:scaleX(0.9830)">Sandals</div>
<div class="t" style="left:296.96px;width:63.12px;transform-origin:63.12px 0;text-align:right;top:505.02px;font-size:14.2px;font-weight:normal;color:#1a1a1a;transform:scaleX(1.1150)">9/13/2014</div>
<div class="t" style="left:452.82px;width:31.56px;transform-origin:31.56px 0;text-align:right;top:505.02px;font-size:14.2px;font-weight:normal;color:#1a1a1a;transform:scaleX(1.0500)">2539</div>
<div class="t" style="left:560.34px;width:47.34px;transform-origin:47.34px 0;text-align:right;top:505.02px;font-size:14.2px;font-weight:normal;color:#1a1a1a;transform:scaleX(1.0500)">122584</div>
<div class="t" style="left:126.79px;width:7.89px;transform-origin:7.89px 0;text-align:right;top:527.23px;font-size:14.2px;font-weight:normal;color:#1a1a1a;transform:scaleX(1.0500)">3</div>
<div class="t" style="left:140.73px;transform-origin:0 0;top:527.23px;font-size:14.2px;font-weight:normal;color:#1a1a1a;transform:scaleX(1.0660)">Umbrellas</div>
<div class="t" style="left:296.96px;width:63.12px;transform-origin:63.12px 0;text-align:right;top:527.23px;font-size:14.2px;font-weight:normal;color:#1a1a1a;transform:scaleX(1.1150)">9/13/2014</div>
<div class="t" style="left:452.82px;width:31.56px;transform-origin:31.56px 0;text-align:right;top:527.23px;font-size:14.2px;font-weight:normal;color:#1a1a1a;transform:scaleX(1.0500)">2030</div>
<div class="t" style="left:568.23px;width:39.45px;transform-origin:39.45px 0;text-align:right;top:527.23px;font-size:14.2px;font-weight:normal;color:#1a1a1a;transform:scaleX(1.0500)">63543</div>
<div class="t" style="left:126.79px;width:7.89px;transform-origin:7.89px 0;text-align:right;top:549.44px;font-size:14.2px;font-weight:normal;color:#1a1a1a;transform:scaleX(1.0500)">4</div>
<div class="t" style="left:141.80px;transform-origin:0 0;top:549.44px;font-size:14.2px;font-weight:normal;color:#1a1a1a;transform:scaleX(1.1160)">Water bottles</div>
<div class="t" style="left:296.96px;width:63.12px;transform-origin:63.12px 0;text-align:right;top:549.44px;font-size:14.2px;font-weight:normal;color:#1a1a1a;transform:scaleX(1.1150)">9/13/2014</div>
<div class="t" style="left:452.82px;width:31.56px;transform-origin:31.56px 0;text-align:right;top:549.44px;font-size:14.2px;font-weight:normal;color:#1a1a1a;transform:scaleX(1.0500)">2350</div>
<div class="t" style="left:568.23px;width:39.45px;transform-origin:39.45px 0;text-align:right;top:549.44px;font-size:14.2px;font-weight:normal;color:#1a1a1a;transform:scaleX(1.0500)">65054</div>
<div class="t" style="left:126.79px;width:7.89px;transform-origin:7.89px 0;text-align:right;top:571.65px;font-size:14.2px;font-weight:normal;color:#1a1a1a;transform:scaleX(1.0500)">5</div>
<div class="t" style="left:141.80px;transform-origin:0 0;top:571.65px;font-size:14.2px;font-weight:normal;color:#1a1a1a;transform:scaleX(1.0190)">Shorts</div>
<div class="t" style="left:296.96px;width:63.12px;transform-origin:63.12px 0;text-align:right;top:571.65px;font-size:14.2px;font-weight:normal;color:#1a1a1a;transform:scaleX(1.1150)">9/13/2014</div>
<div class="t" style="left:452.82px;width:31.56px;transform-origin:31.56px 0;text-align:right;top:571.65px;font-size:14.2px;font-weight:normal;color:#1a1a1a;transform:scaleX(1.0500)">2818</div>
<div class="t" style="left:568.23px;width:39.45px;transform-origin:39.45px 0;text-align:right;top:571.65px;font-size:14.2px;font-weight:normal;color:#1a1a1a;transform:scaleX(1.0500)">49686</div>
<div class="t" style="left:18.15px;width:7.89px;transform-origin:3.95px 0;top:238.40px;font-size:14.2px;font-weight:bold;color:#217346;transform:scaleX(1.0500)">1</div>
<div class="t" style="left:18.15px;width:7.89px;transform-origin:3.95px 0;top:260.61px;font-size:14.2px;font-weight:normal;color:#444;transform:scaleX(1.0500)">2</div>
<div class="t" style="left:18.15px;width:7.89px;transform-origin:3.95px 0;top:282.82px;font-size:14.2px;font-weight:normal;color:#444;transform:scaleX(1.0500)">3</div>
<div class="t" style="left:18.15px;width:7.89px;transform-origin:3.95px 0;top:305.03px;font-size:14.2px;font-weight:normal;color:#444;transform:scaleX(1.0500)">4</div>
<div class="t" style="left:18.15px;width:7.89px;transform-origin:3.95px 0;top:327.24px;font-size:14.2px;font-weight:normal;color:#444;transform:scaleX(1.0500)">5</div>
<div class="t" style="left:18.15px;width:7.89px;transform-origin:3.95px 0;top:349.45px;font-size:14.2px;font-weight:normal;color:#444;transform:scaleX(1.0500)">6</div>
<div class="t" style="left:18.15px;width:7.89px;transform-origin:3.95px 0;top:371.66px;font-size:14.2px;font-weight:normal;color:#444;transform:scaleX(1.0500)">7</div>
<div class="t" style="left:18.15px;width:7.89px;transform-origin:3.95px 0;top:393.87px;font-size:14.2px;font-weight:normal;color:#444;transform:scaleX(1.0500)">8</div>
<div class="t" style="left:18.15px;width:7.89px;transform-origin:3.95px 0;top:416.08px;font-size:14.2px;font-weight:normal;color:#444;transform:scaleX(1.0500)">9</div>
<div class="t" style="left:14.21px;width:15.78px;transform-origin:7.89px 0;top:438.29px;font-size:14.2px;font-weight:normal;color:#444;transform:scaleX(1.0500)">10</div>
<div class="t" style="left:14.74px;width:14.73px;transform-origin:7.36px 0;top:460.50px;font-size:14.2px;font-weight:normal;color:#444;transform:scaleX(1.0500)">11</div>
<div class="t" style="left:14.21px;width:15.78px;transform-origin:7.89px 0;top:482.71px;font-size:14.2px;font-weight:normal;color:#444;transform:scaleX(1.0500)">12</div>
<div class="t" style="left:14.21px;width:15.78px;transform-origin:7.89px 0;top:504.92px;font-size:14.2px;font-weight:normal;color:#444;transform:scaleX(1.0500)">13</div>
<div class="t" style="left:14.21px;width:15.78px;transform-origin:7.89px 0;top:527.13px;font-size:14.2px;font-weight:normal;color:#444;transform:scaleX(1.0500)">14</div>
<div class="t" style="left:14.21px;width:15.78px;transform-origin:7.89px 0;top:549.34px;font-size:14.2px;font-weight:normal;color:#444;transform:scaleX(1.0500)">15</div>
<div class="t" style="left:14.21px;width:15.78px;transform-origin:7.89px 0;top:571.55px;font-size:14.2px;font-weight:normal;color:#444;transform:scaleX(1.0500)">16</div>
<div class="t" style="left:14.21px;width:15.78px;transform-origin:7.89px 0;top:593.76px;font-size:14.2px;font-weight:normal;color:#444;transform:scaleX(1.0500)">17</div>
<div class="t" style="left:14.21px;width:15.78px;transform-origin:7.89px 0;top:615.97px;font-size:14.2px;font-weight:normal;color:#444;transform:scaleX(1.0500)">18</div>
<div class="t" style="left:14.21px;width:15.78px;transform-origin:7.89px 0;top:638.18px;font-size:14.2px;font-weight:normal;color:#444;transform:scaleX(1.0500)">19</div>
<div class="t" style="left:115.49px;transform-origin:0 0;top:663.10px;font-size:14px;font-weight:normal;color:#efe6f6;transform:scaleX(1.1149)">PrimaryTable</div>
<div class="t" style="left:233.70px;transform-origin:0 0;top:663.20px;font-size:13.5px;font-weight:bold;color:#217346;transform:scaleX(1.1498)">3QReport</div>
<div class="t" style="left:329.60px;transform-origin:0 0;top:662.70px;font-size:14.3px;font-weight:normal;color:#505050;transform:scaleX(1.1127)">AutoCommands</div>
<div class="t" style="left:12.50px;transform-origin:0 0;top:693.50px;font-size:10.8px;font-weight:normal;color:#ffffff;transform:scaleX(0.9595)">READY</div>
</div>
<svg class="r" style="left:-10px;top:45px;overflow:visible" width="125" height="90" viewBox="-10 45 125 90"><ellipse cx="48.3" cy="91" rx="50.5" ry="33.8" fill="none" stroke="#F07B3A" stroke-width="4.3"/></svg>
<svg class="r" style="left:215px;top:620px;overflow:visible" width="110" height="92" viewBox="215 620 110 92"><ellipse cx="269.65" cy="667.4" rx="45.5" ry="36.8" fill="none" stroke="#F07B3A" stroke-width="4.3"/></svg>
<svg class="r" style="left:604px;top:582px;overflow:visible" width="10" height="10" viewBox="604 582 10 10"><rect x="607.4" y="584.6" width="3.6" height="3.6" fill="#3a58a8"/></svg>
</body></html>
